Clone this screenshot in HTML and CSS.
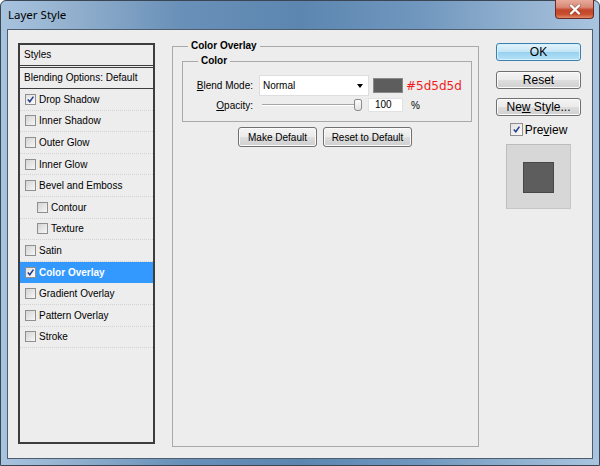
FILE: index.html
```html
<!DOCTYPE html>
<html lang="en">
<head>
    <meta charset="UTF-8">
    <title>Layer Style</title>
    <link rel="stylesheet" href="styles.css">
</head>
<body>
<div class="window">
    <div class="titlebar">
        <span class="title">Layer Style</span>
        <span class="close-btn">
            <svg width="14" height="11" viewBox="0 0 14 11">
                <path d="M3 1.5 L11 9.5 M11 1.5 L3 9.5" stroke="#3a1010" stroke-width="3.6" stroke-linecap="round" opacity="0.35"/>
                <path d="M3 1.5 L11 9.5 M11 1.5 L3 9.5" stroke="#fff" stroke-width="2.4" stroke-linecap="round"/>
            </svg>
        </span>
    </div>

    <div class="client">
        <!-- список стилей слева -->
        <div class="styles-list">
            <div class="list-head">Styles</div>
            <div class="list-blend">Blending Options: Default</div>
            <div class="list-item"><span class="check checked"></span>Drop Shadow</div>
            <div class="list-item"><span class="check"></span>Inner Shadow</div>
            <div class="list-item"><span class="check"></span>Outer Glow</div>
            <div class="list-item"><span class="check"></span>Inner Glow</div>
            <div class="list-item"><span class="check"></span>Bevel and Emboss</div>
            <div class="list-item sub"><span class="check"></span>Contour</div>
            <div class="list-item sub"><span class="check"></span>Texture</div>
            <div class="list-item"><span class="check"></span>Satin</div>
            <div class="list-item selected"><span class="check checked"></span>Color Overlay</div>
            <div class="list-item"><span class="check"></span>Gradient Overlay</div>
            <div class="list-item"><span class="check"></span>Pattern Overlay</div>
            <div class="list-item"><span class="check"></span>Stroke</div>
        </div>

        <!-- настройки эффекта -->
        <fieldset class="group main-group">
            <legend>Color Overlay</legend>
            <fieldset class="group color-group">
                <legend>Color</legend>
                <div class="row row-blend">
                    <span class="lbl"><u>B</u>lend Mode:</span>
                    <div class="select">Normal<span class="arrow"></span></div>
                    <span class="swatch"></span>
                    <span class="hex">#5d5d5d</span>
                </div>
                <div class="row row-opacity">
                    <span class="lbl"><u>O</u>pacity:</span>
                    <div class="slider"><span class="thumb"></span></div>
                    <div class="num">100</div>
                    <span class="pct">%</span>
                </div>
            </fieldset>
            <div class="btn-row">
                <button class="btn btn-make">Make Default</button>
                <button class="btn btn-reset-def">Reset to Default</button>
            </div>
        </fieldset>

        <!-- кнопки справа -->
        <div class="side">
            <button class="btn side-btn btn-ok">OK</button>
            <button class="btn side-btn">Reset</button>
            <button class="btn side-btn">Ne<u>w</u> Style...</button>
            <div class="preview-check"><span class="check big checked"></span>Pre<u>v</u>iew</div>
            <div class="preview"><div class="preview-swatch"></div></div>
        </div>
    </div>
</div>
</body>
</html>
```

FILE: styles.css
```css
body {
    margin: 0;
    font-family: "Liberation Sans", Arial, sans-serif;
    font-size: 10px;
    color: #000;
    background: #fff;
}

.window {
    width: 600px;
    height: 466px;
    box-sizing: border-box;
    display: flex;
    flex-direction: column;
    padding: 0 6px 6px;
    border: 1px solid #3b4654;
    border-radius: 6px 6px 0 0;
    background: linear-gradient(90deg, #a8c3de 0%, #92b0ce 12%, #6990b8 30%, #5c86b0 50%, #7097be 70%, #94b3d1 88%, #a9c4df 100%);
}

.titlebar {
    height: 28px;
    display: flex;
    justify-content: space-between;
    align-items: flex-start;
}

.title {
    font-family: "Noto Sans", sans-serif;
    font-size: 11.5px;
    margin: 6px 0 0 1px;
}

.close-btn {
    width: 39px;
    height: 19px;
    box-sizing: border-box;
    margin-right: -1px;
    margin-top: -1px;
    border: 1px solid #6b2a22;
    border-top: none;
    border-radius: 0 0 4px 4px;
    background: linear-gradient(#e8aa9b 0%, #d88976 40%, #c2462b 55%, #c9502e 80%, #e08a6c 100%);
    display: flex;
    align-items: center;
    justify-content: center;
}

.client {
    flex: 1;
    display: flex;
    align-items: flex-start;
    background: #ededed;
    border: 1px solid #4d5e70;
    padding: 13px 0 0 10px;
}

/* список стилей */
.styles-list {
    width: 137px;
    height: 401px;
    box-sizing: border-box;
    border: 2px solid #3d3d3d;
    background: #ededed;
}

.list-head {
    height: 20px;
    line-height: 20px;
    padding-left: 4px;
    border-bottom: 3px double #3d3d3d;
}

.list-blend {
    height: 20px;
    line-height: 20px;
    padding-left: 4px;
    border-bottom: 1px solid #3d3d3d;
}

.list-item {
    height: 20.6px;
    display: flex;
    align-items: center;
    padding-left: 5px;
    border-bottom: 1px dotted #d2d2d2;
}

.list-item.sub {
    padding-left: 17px;
}

.list-item.selected {
    background: #3399ff;
    color: #fff;
    font-weight: bold;
    border-bottom-color: #3399ff;
}

.check {
    width: 11px;
    height: 11px;
    box-sizing: border-box;
    border: 1px solid #8e8f8f;
    background: linear-gradient(135deg, #d4d4d4, #f6f6f6);
    margin-right: 3px;
    flex-shrink: 0;
    display: inline-block;
}

.check.checked {
    background: url("data:image/svg+xml,%3Csvg xmlns='http://www.w3.org/2000/svg' width='9' height='9'%3E%3Cpath d='M1.8 4.6 L3.8 6.8 L7.4 1.6' fill='none' stroke='%23233e8f' stroke-width='1.5'/%3E%3C/svg%3E") center no-repeat, linear-gradient(135deg, #e2e2e2, #fbfbfb);
}

.check.big {
    width: 13px;
    height: 13px;
    margin-right: 2px;
}

/* группы */
.group {
    margin: 0;
    border: 1px solid #a9a9a9;
    box-sizing: border-box;
}

.group legend {
    font-weight: bold;
    line-height: 12px;
    padding: 0 3px;
    margin-left: 6px;
}

.main-group {
    width: 307px;
    height: 407px;
    margin: -3px 0 0 17px;
    padding: 3px 6px 0 9px;
}

.color-group {
    height: 67px;
    padding: 0 0 0 9px;
}

.row {
    display: flex;
    align-items: center;
}

.lbl {
    width: 61px;
    text-align: right;
    flex-shrink: 0;
}

.row-blend {
    height: 21px;
    margin-top: 8px;
}

.select {
    width: 110px;
    height: 21px;
    box-sizing: border-box;
    margin-left: 6px;
    padding-left: 3px;
    background: #fff;
    border: 1px solid #dedede;
    display: flex;
    align-items: center;
    justify-content: space-between;
}

.arrow {
    width: 0;
    height: 0;
    margin-right: 5px;
    border-left: 3.5px solid transparent;
    border-right: 3.5px solid transparent;
    border-top: 4px solid #000;
}

.swatch {
    width: 30px;
    height: 15px;
    box-sizing: border-box;
    margin-left: 4px;
    background: #5d5d5d;
    border: 1px solid #8a8a8a;
}

.hex {
    margin-left: 3px;
    font-family: "DejaVu Sans", sans-serif;
    font-size: 12px;
    color: #f21b1b;
}

.row-opacity {
    height: 14px;
    margin-top: 2px;
}

.slider {
    width: 100px;
    height: 12px;
    margin-left: 9px;
    display: flex;
    justify-content: flex-end;
    background: linear-gradient(#a6a6a6, #a6a6a6) 0 5px / 100% 1px no-repeat,
                linear-gradient(#fff, #fff) 0 6px / 100% 1px no-repeat;
}

.thumb {
    width: 8px;
    height: 12px;
    box-sizing: border-box;
    border: 1px solid #8b8b8b;
    border-radius: 2px 2px 3px 3px;
    background: linear-gradient(#fdfdfd, #e2e2e2);
}

.num {
    width: 35px;
    height: 14px;
    box-sizing: border-box;
    margin-left: 6px;
    padding-left: 6px;
    line-height: 12px;
    background: #fff;
    border: 1px solid #e2e2e2;
}

.pct {
    margin-left: 8px;
}

.btn-row {
    display: flex;
    gap: 6px;
    margin: 5px 0 0 56px;
}

/* кнопки */
.btn {
    height: 20px;
    box-sizing: border-box;
    padding: 0;
    font-family: "Liberation Sans", Arial, sans-serif;
    font-size: 10px;
    color: #000;
    border: 1px solid #707070;
    border-radius: 3px;
    background: linear-gradient(#f4f4f4 0%, #ebebeb 48%, #dddddd 52%, #cfcfcf 100%);
    box-shadow: inset 0 0 0 1px #fbfbfb;
}

.btn-make {
    width: 79px;
}

.btn-reset-def {
    width: 89px;
}

.side {
    width: 85px;
    margin-left: 17px;
    display: flex;
    flex-direction: column;
    align-items: center;
}

.side-btn {
    width: 85px;
    height: 18px;
    font-size: 12px;
    margin-bottom: 9px;
}

.btn-ok {
    margin-bottom: 10px;
    border-color: #3c7fb1;
    background: linear-gradient(#e5f4fc 0%, #c4e5f6 48%, #98d1ef 52%, #b6e2f7 100%);
    box-shadow: inset 0 0 0 1px #d4f0fd;
}

.preview-check {
    display: flex;
    align-items: center;
    font-size: 12px;
    height: 13px;
    margin-top: -2px;
}

.preview {
    width: 65px;
    height: 65px;
    box-sizing: border-box;
    margin-top: 8px;
    padding: 17px 0 0 16px;
    background: #d7d7d7;
    border: 1px solid #c6c6c6;
    border-top-color: #bcbcbc;
    border-left-color: #bcbcbc;
}

.preview-swatch {
    width: 31px;
    height: 31px;
    box-sizing: border-box;
    background: #5d5d5d;
    border: 1px solid #474747;
}
```
